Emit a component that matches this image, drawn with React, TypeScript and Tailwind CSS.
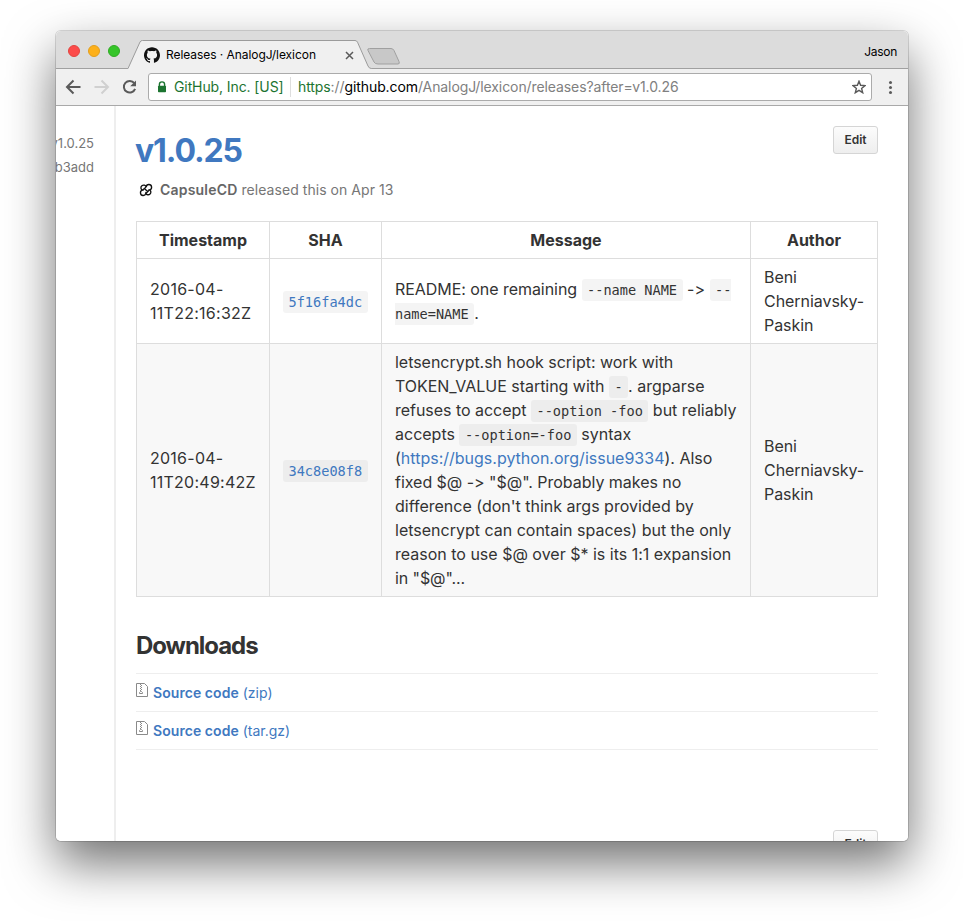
import React from "react";
import { SiGithub } from "react-icons/si";

const link = "text-[#4078c0]";

function Code({ children, dark = false, blue = false }: { children: React.ReactNode; dark?: boolean; blue?: boolean }) {
  return (
    <code
      className={`rounded-[3px] px-[5.5px] py-[3px] font-['DejaVu_Sans_Mono',monospace] text-[13.6px] leading-none ${
        dark ? "bg-[#ededed]" : "bg-[#f4f4f4]"
      } ${blue ? "text-[#4078c0]" : "text-[#333]"}`}
    >
      {children}
    </code>
  );
}

function TitleBar() {
  return (
    <div className="relative flex h-[38px] items-start border-b border-[#a0a0a0] bg-[#dcdcdc]">
      <div className="flex gap-2 pl-3 pt-[14px]">
        <span className="size-3 rounded-full border border-[#e2443f] bg-[#fc4b4a]" />
        <span className="size-3 rounded-full border border-[#e39e1c] bg-[#fdb01a]" />
        <span className="size-3 rounded-full border border-[#30ab24] bg-[#35c529]" />
      </div>
      <svg className="absolute left-[72px] top-0 h-[38px] w-[280px]" viewBox="0 0 280 38" fill="none">
        <path d="M0 38 V37.5 L12 11 Q12.7 9.5 14.5 9.5 L227 9.5 Q228.7 9.5 229.5 11.2 L240 35 Q241 37.5 243.5 37.5 V38 Z" fill="#f0f0f0" />
        <path d="M0 37.5 L12 11 Q12.7 9.5 14.5 9.5 L227 9.5 Q228.7 9.5 229.5 11.2 L240 35 Q241 37.5 243.5 37.5" stroke="#9b9b9b" />
        <path d="M241.5 17.5 H263 Q265 17.5 266 19.5 L271 30.5 Q272 33 270 33 H250 Q247 33 246 31 L240 19.5 Q239 17.5 241.5 17.5 Z" fill="#c8c8c8" stroke="#a0a0a0" />
      </svg>
      <div className="relative ml-[24px] mt-[15px] flex h-[18px] w-[209.5px] items-center">
        <SiGithub className="size-4 shrink-0 text-[#111]" />
        <span className="ml-[6px] whitespace-nowrap text-[12px] tracking-[-0.06px] text-black">Releases · AnalogJ/lexicon</span>
        <svg className="ml-auto size-[9px]" viewBox="0 0 9 9" stroke="#5a5a5a" strokeWidth="1.5">
          <path d="M1 1 L8 8 M8 1 L1 8" />
        </svg>
      </div>
      <span className="ml-auto pr-[11px] pt-[12px] text-[12px] leading-[18px] tracking-[-0.3px] text-black">Jason</span>
    </div>
  );
}

function Toolbar() {
  return (
    <div className="flex h-[37px] items-center border-b border-[#a9a9a9] bg-[#f0f0f0]">
      <svg className="ml-[9px] h-4 w-[74px] shrink-0" viewBox="0 0 74 16" fill="none" strokeWidth="2">
        <path d="M15.5 8 H2.5 M8.5 1.5 L2 8 L8.5 14.5" stroke="#5a5a5a" />
        <path d="M29.5 8 H42.5 M36.5 1.5 L43 8 L36.5 14.5" stroke="#d0d0d0" />
        <path d="M69.3 4.2 A5.8 5.8 0 1 0 70.1 9.8" stroke="#5a5a5a" />
        <path d="M71 1.5 V7.3 H65.2 Z" fill="#5a5a5a" />
      </svg>
      <div className="ml-[9px] flex h-[28px] w-[724px] items-center rounded-[3px] border border-[#ababab] bg-white text-[14px] leading-[24px]">
        <svg className="ml-[8px] h-[12px] w-[10px]" viewBox="0 0 10 12">
          <path d="M2.4 5 V3.5 a2.6 2.6 0 0 1 5.2 0 V5" fill="none" stroke="#1c7430" strokeWidth="1.4" />
          <rect x="1" y="4.7" width="8" height="6.6" rx=".8" fill="#1c7430" />
        </svg>
        <span className="ml-[7px] w-[110px] whitespace-nowrap tracking-[-0.1px] text-[#1c7430]">GitHub, Inc. [US]</span>
        <span className="ml-[6px] h-5 w-px bg-[#dedede]" />
        <span className="ml-[7px] whitespace-nowrap tracking-[-0.09px] text-[#808080]">
          <span className="text-[#1c7430]">https</span>://<span className="text-black">github.com</span>/AnalogJ/lexicon/releases?after=v1.0.26
        </span>
        <svg className="ml-auto mr-[5px] size-[14px]" viewBox="0 0 14 14" fill="none" stroke="#5a5a5a" strokeWidth="1.4">
          <path d="M7 1.2 L8.6 5.3 L13 5.6 L9.6 8.4 L10.7 12.7 L7 10.3 L3.3 12.7 L4.4 8.4 L1 5.6 L5.4 5.3 Z" />
        </svg>
      </div>
      <div className="ml-[16px] flex w-[4px] flex-col items-center gap-[2px]">
        <span className="size-[3px] rounded-full bg-[#5a5a5a]" />
        <span className="size-[3px] rounded-full bg-[#5a5a5a]" />
        <span className="size-[3px] rounded-full bg-[#5a5a5a]" />
      </div>
    </div>
  );
}

function EditButton() {
  return (
    <button className="h-[28px] w-[45px] shrink-0 rounded-[3px] border border-[#d5d5d5] bg-gradient-to-b from-[#fcfcfc] to-[#eeeeee] text-[12px] font-semibold leading-[26px] text-[#333]">
      Edit
    </button>
  );
}

function Download({ kind }: { kind: string }) {
  return (
    <li className="flex h-[38px] items-center border-b border-[#eee] text-[14px] text-[#4078c0]">
      <svg className="-mt-[5px] h-[14px] w-[12px] shrink-0" viewBox="0 0 12 14" fill="none" stroke="#8a8a8a">
        <path d="M.5 .5 H8.5 L11.5 3.5 V13.5 H.5 Z" />
        <path d="M4.5 1 V8 M5.5 2 V8" strokeDasharray="1 1" />
        <path d="M3.5 10.5 V9.5 L4.5 8.5 H5.5 L6.5 9.5 V10.5 Z" />
      </svg>
      <span className="ml-[5px] whitespace-nowrap">
        <b className="font-semibold tracking-[0.06px]">Source code</b> ({kind})
      </span>
    </li>
  );
}

const cell = "border border-[#ddd] px-[13px] py-[6px]";

export default function App() {
  return (
    <div className="h-[921px] w-[964px] overflow-hidden bg-white pl-[56px] pt-[31px] font-[Inter,sans-serif] [font-feature-settings:'calt'_0]">
      <div className="h-[810px] w-[852px] rounded-[5px] shadow-[0_0_0_1px_rgba(0,0,0,0.14),0_22px_50px_rgba(0,0,0,0.56)]">
        <div className="flex h-full flex-col overflow-hidden rounded-[5px] bg-white">
          <TitleBar />
          <Toolbar />
          <div className="flex min-h-0 flex-1 overflow-hidden">
            <aside className="flex w-[60px] shrink-0 flex-col items-end overflow-hidden border-r-2 border-[#eee] pr-[20px] pt-[25px] text-[13px] leading-6 text-[#767676]">
              <span>v1.0.25</span>
              <span>b3add</span>
            </aside>
            <main className="flex w-[762px] shrink-0 flex-col pl-[20px] pt-[20px] text-[#333]">
              <div className="flex h-[50px] justify-between">
                <h1 className={`-ml-px text-[32px] font-bold leading-[50px] tracking-[-1.1px] ${link}`}>v1.0.25</h1>
                <EditButton />
              </div>
              <div className="mt-[3px] flex h-[20px] items-center text-[14px] text-[#767676]">
                <svg className="ml-[3px] mt-px size-[14px]" viewBox="0 0 14 14" fill="none" stroke="#111" strokeWidth="1.35">
                  <path d="M7.2 4 A2.7 2.7 0 1 0 3.4 7.2 A2.7 2.7 0 1 0 6.8 10.4 A2.7 2.7 0 1 0 10.6 6.8 A2.7 2.7 0 1 0 7.2 4" />
                  <path d="M3.4 7.2 L7.2 4 M6.8 10.4 L10.6 6.8 M5.2 5.6 L8.8 8.6" />
                </svg>
                <span className="ml-[7px] whitespace-nowrap tracking-[0.05px]">
                  <b className="font-semibold tracking-[0.2px] text-[#666]">CapsuleCD</b> released this on Apr 13
                </span>
              </div>
              <table className="mt-[22px] w-[742px] table-fixed border-collapse whitespace-nowrap text-[16px] leading-6">
                <colgroup>
                  <col className="w-[133px]" />
                  <col className="w-[112px]" />
                  <col className="w-[369px]" />
                  <col className="w-[127px]" />
                </colgroup>
                <thead>
                  <tr className="h-[37px]">
                    {["Timestamp", "SHA", "Message", "Author"].map((h) => (
                      <th key={h} className={`${cell} text-center font-bold`}>{h}</th>
                    ))}
                  </tr>
                </thead>
                <tbody>
                  <tr className="h-[85px]">
                    <td className={`${cell} tracking-[0.27px]`}>2016-04-<br />11T22:16:32Z</td>
                    <td className={cell}><Code blue>5f16fa4dc</Code></td>
                    <td className={cell}>
                      <span className="tracking-[-0.05px]">README: one remaining </span><Code>--name NAME</Code> -&gt; <Code>--<br />name=NAME</Code>.
                    </td>
                    <td className={`${cell} tracking-[-0.05px]`}>Beni<br />Cherniavsky-<br />Paskin</td>
                  </tr>
                  <tr className="h-[253px] bg-[#f8f8f8]">
                    <td className={`${cell} tracking-[0.25px]`}>2016-04-<br />11T20:49:42Z</td>
                    <td className={cell}><Code dark blue>34c8e08f8</Code></td>
                    <td className={cell}>
                      <span className="tracking-[-0.03px]">letsencrypt.sh hook script: work with</span><br />
                      <span className="tracking-[-0.03px]">TOKEN_VALUE starting with </span><Code dark>-</Code>. argparse<br />
                      <span className="tracking-[-0.03px]">refuses to accept </span><Code dark>--option -foo</Code> but reliably<br />
                      accepts <Code dark>--option=-foo</Code> syntax<br />
                      (<span className={link}>https://bugs.python.org/issue9334</span>). Also<br />
                      <span className="tracking-[-0.03px]">fixed $@ -&gt; "$@". Probably makes no</span><br />
                      difference (don't think args provided by<br />
                      letsencrypt can contain spaces) but the only<br />
                      reason to use $@ over $* is its 1:1 expansion<br />
                      <span className="tracking-[-0.1px]">in "$@"...</span>
                    </td>
                    <td className={`${cell} tracking-[-0.05px]`}>Beni<br />Cherniavsky-<br />Paskin</td>
                  </tr>
                </tbody>
              </table>
              <h2 className="mt-[33px] text-[24px] font-bold leading-[32px] tracking-[-1.05px]">Downloads</h2>
              <ul className="mt-[11px] border-t border-[#eee]">
                <Download kind="zip" />
                <Download kind="tar.gz" />
              </ul>
              <div className="mt-[80px] flex justify-end">
                <EditButton />
              </div>
            </main>
          </div>
        </div>
      </div>
    </div>
  );
}
